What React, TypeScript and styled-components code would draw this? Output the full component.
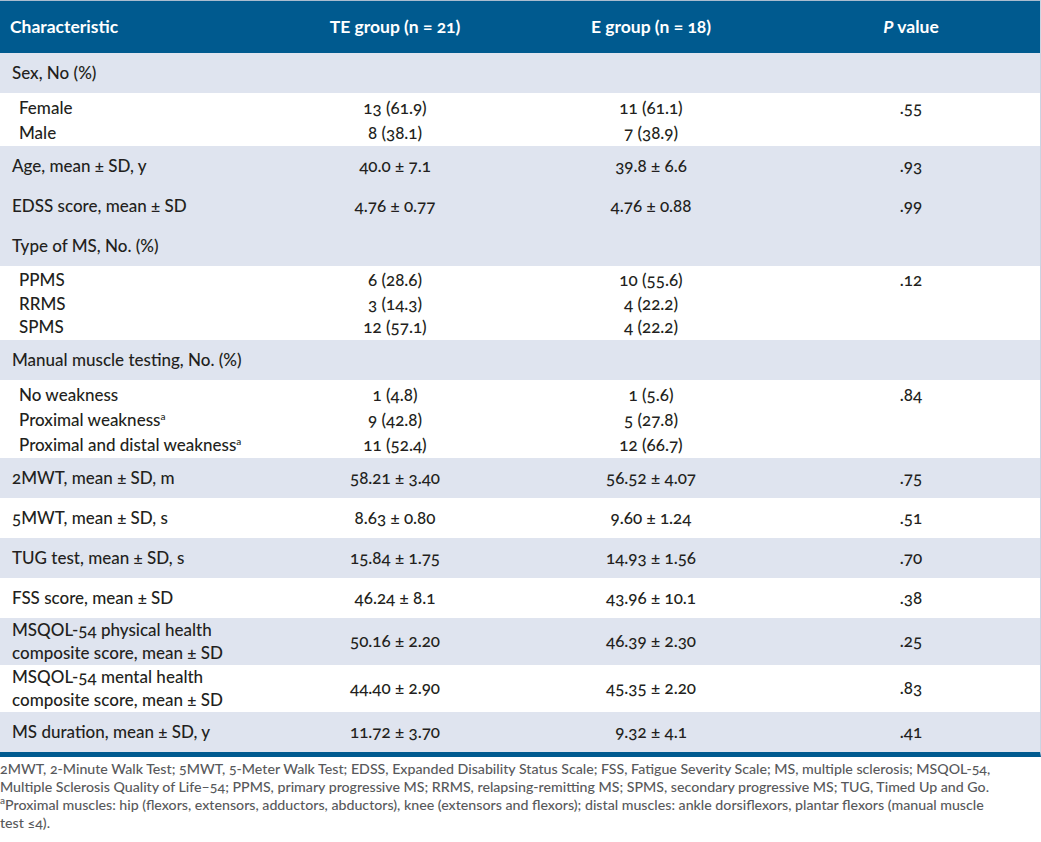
import React from "react";
import styled, { createGlobalStyle } from "styled-components";

const GlobalStyle = createGlobalStyle`
  html, body {
    margin: 0;
    padding: 0;
    background: #ffffff;
  }
  body {
    font-family: Lato, "Open Sans", "Liberation Sans", sans-serif;
    color: #231f20;
  }
`;

const BLUE = "#005a8f";
const SHADE = "#dfe4ef";
const COLS = "270px 250px 262px 1fr";

const Page = styled.div`
  width: 1041px;
  font-variant-numeric: oldstyle-nums;
  font-feature-settings: "onum" 1;
`;

const Table = styled.div`
  width: 100%;
  border-bottom: 5px solid ${BLUE};
  border-right: 1px solid #c9d4e2;
  box-sizing: border-box;
`;

const HeaderRow = styled.div`
  display: grid;
  grid-template-columns: ${COLS};
  align-items: center;
  height: 53px;
  background: ${BLUE};
  border-top: 1px solid #a9bccf;
  box-sizing: border-box;
  color: #ffffff;
  font-weight: 700;
  font-size: 17.5px;
`;

const HeadCell = styled.div<{ $left?: boolean }>`
  text-align: ${(p) => (p.$left ? "left" : "center")};
  padding-left: ${(p) => (p.$left ? "10px" : "0")};
  padding-bottom: 1px;
`;

const Row = styled.div<{ $shaded?: boolean; $pad?: number }>`
  display: grid;
  grid-template-columns: ${COLS};
  align-items: center;
  background: ${(p) => (p.$shaded ? SHADE : "#ffffff")};
  padding: ${(p) => (p.$pad ?? 8)}px 0;
  font-size: 17px;
  font-weight: 500;
  line-height: 24px;
`;

const TallRow = styled(Row)`
  line-height: 22.5px;
`;

const BlockRow = styled.div<{ $lh?: number }>`
  display: grid;
  grid-template-columns: ${COLS};
  align-items: start;
  background: #ffffff;
  padding: 2px 0 1px;
  font-size: 17px;
  font-weight: 500;
  line-height: ${(p) => p.$lh ?? 25}px;
`;

const Label = styled.div<{ $indent?: boolean }>`
  padding-left: ${(p) => (p.$indent ? "19px" : "12px")};
`;

const Value = styled.div`
  text-align: center;
`;

const Stack = styled.div`
  display: flex;
  flex-direction: column;
`;

const Sup = styled.sup`
  font-size: 10px;
  line-height: 0;
  vertical-align: 6px;
`;

const Italic = styled.i`
  font-style: italic;
`;

const Notes = styled.div`
  margin-top: 3px;
  font-size: 14.2px;
  line-height: 18px;
  font-weight: 500;
  color: #58595b;
`;

const NoteP = styled.p`
  margin: 0;
`;

type Simple = { label: React.ReactNode; te: string; e: string; p: string };

type Block = {
  lines: { label: React.ReactNode; te: string; e: string }[];
  p: string;
};

function SimpleRow({ r, shaded }: { r: Simple; shaded?: boolean }) {
  return (
    <Row $shaded={shaded}>
      <Label>{r.label}</Label>
      <Value>{r.te}</Value>
      <Value>{r.e}</Value>
      <Value>{r.p}</Value>
    </Row>
  );
}

function GroupTitle({ children }: { children: React.ReactNode }) {
  return (
    <Row $shaded>
      <Label>{children}</Label>
      <div />
      <div />
      <div />
    </Row>
  );
}

function SubBlock({ b, lh }: { b: Block; lh?: number }) {
  return (
    <BlockRow $lh={lh}>
      <Stack>
        {b.lines.map((l, i) => (
          <Label $indent key={i}>
            {l.label}
          </Label>
        ))}
      </Stack>
      <Stack>
        {b.lines.map((l, i) => (
          <Value key={i}>{l.te}</Value>
        ))}
      </Stack>
      <Stack>
        {b.lines.map((l, i) => (
          <Value key={i}>{l.e}</Value>
        ))}
      </Stack>
      <Value>{b.p}</Value>
    </BlockRow>
  );
}

function TwoLineRow({
  a,
  b,
  te,
  e,
  p,
  shaded,
}: {
  a: string;
  b: string;
  te: string;
  e: string;
  p: string;
  shaded?: boolean;
}) {
  return (
    <TallRow $shaded={shaded} $pad={1}>
      <Label>
        {a}
        <br />
        {b}
      </Label>
      <Value>{te}</Value>
      <Value>{e}</Value>
      <Value>{p}</Value>
    </TallRow>
  );
}

export default function App() {
  return (
    <Page>
      <GlobalStyle />
      <Table>
        <HeaderRow>
          <HeadCell $left>Characteristic</HeadCell>
          <HeadCell>TE group (n = 21)</HeadCell>
          <HeadCell>E group (n = 18)</HeadCell>
          <HeadCell>
            <Italic>P</Italic> value
          </HeadCell>
        </HeaderRow>

        <GroupTitle>Sex, No (%)</GroupTitle>
        <SubBlock
          b={{
            lines: [
              { label: "Female", te: "13 (61.9)", e: "11 (61.1)" },
              { label: "Male", te: "8 (38.1)", e: "7 (38.9)" },
            ],
            p: ".55",
          }}
        />

        <SimpleRow
          shaded
          r={{ label: "Age, mean ± SD, y", te: "40.0 ± 7.1", e: "39.8 ± 6.6", p: ".93" }}
        />
        <SimpleRow
          shaded
          r={{ label: "EDSS score, mean ± SD", te: "4.76 ± 0.77", e: "4.76 ± 0.88", p: ".99" }}
        />
        <GroupTitle>Type of MS, No. (%)</GroupTitle>
        <SubBlock
          lh={23.7}
          b={{
            lines: [
              { label: "PPMS", te: "6 (28.6)", e: "10 (55.6)" },
              { label: "RRMS", te: "3 (14.3)", e: "4 (22.2)" },
              { label: "SPMS", te: "12 (57.1)", e: "4 (22.2)" },
            ],
            p: ".12",
          }}
        />

        <GroupTitle>Manual muscle testing, No. (%)</GroupTitle>
        <SubBlock
          b={{
            lines: [
              { label: "No weakness", te: "1 (4.8)", e: "1 (5.6)" },
              {
                label: (
                  <>
                    Proximal weakness<Sup>a</Sup>
                  </>
                ),
                te: "9 (42.8)",
                e: "5 (27.8)",
              },
              {
                label: (
                  <>
                    Proximal and distal weakness<Sup>a</Sup>
                  </>
                ),
                te: "11 (52.4)",
                e: "12 (66.7)",
              },
            ],
            p: ".84",
          }}
        />

        <SimpleRow
          shaded
          r={{ label: "2MWT, mean ± SD, m", te: "58.21 ± 3.40", e: "56.52 ± 4.07", p: ".75" }}
        />
        <SimpleRow
          r={{ label: "5MWT, mean ± SD, s", te: "8.63 ± 0.80", e: "9.60 ± 1.24", p: ".51" }}
        />
        <SimpleRow
          shaded
          r={{ label: "TUG test, mean ± SD, s", te: "15.84 ± 1.75", e: "14.93 ± 1.56", p: ".70" }}
        />
        <SimpleRow
          r={{ label: "FSS score, mean ± SD", te: "46.24 ± 8.1", e: "43.96 ± 10.1", p: ".38" }}
        />
        <TwoLineRow
          shaded
          a="MSQOL-54 physical health"
          b="composite score, mean ± SD"
          te="50.16 ± 2.20"
          e="46.39 ± 2.30"
          p=".25"
        />
        <TwoLineRow
          a="MSQOL-54 mental health"
          b="composite score, mean ± SD"
          te="44.40 ± 2.90"
          e="45.35 ± 2.20"
          p=".83"
        />
        <SimpleRow
          shaded
          r={{ label: "MS duration, mean ± SD, y", te: "11.72 ± 3.70", e: "9.32 ± 4.1", p: ".41" }}
        />
      </Table>

      <Notes>
        <NoteP>
          2MWT, 2-Minute Walk Test; 5MWT, 5-Meter Walk Test; EDSS, Expanded Disability Status
          Scale; FSS, Fatigue Severity Scale; MS, multiple sclerosis; MSQOL-54,
          <br />
          Multiple Sclerosis Quality of Life–54; PPMS, primary progressive MS; RRMS,
          relapsing-remitting MS; SPMS, secondary progressive MS; TUG, Timed Up and Go.
        </NoteP>
        <NoteP>
          <Sup>a</Sup>Proximal muscles: hip (flexors, extensors, adductors, abductors), knee
          (extensors and flexors); distal muscles: ankle dorsiflexors, plantar flexors (manual
          muscle
          <br />
          test ≤4).
        </NoteP>
      </Notes>
    </Page>
  );
}
